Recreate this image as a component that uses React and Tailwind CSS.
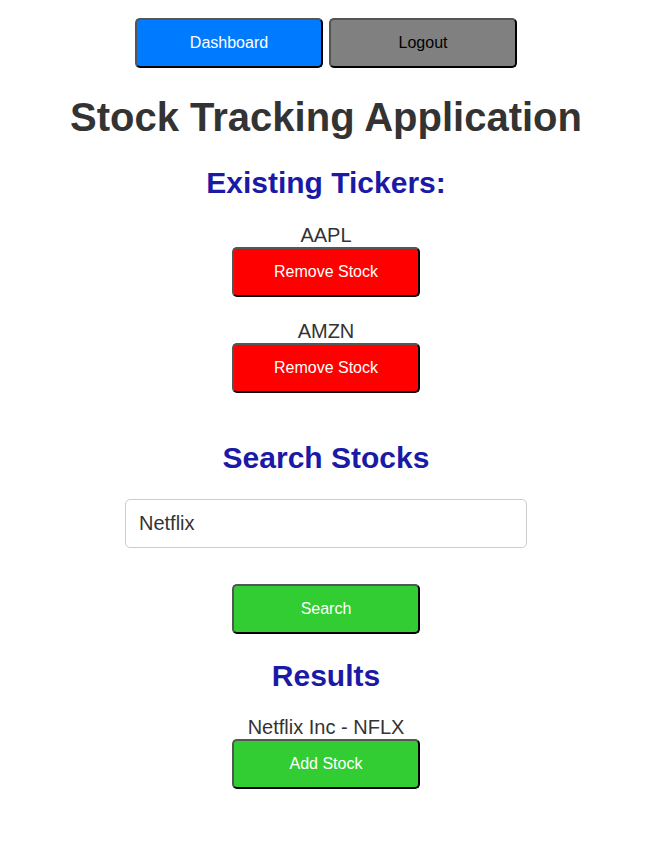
const tickers = ['AAPL', 'AMZN']

const btn =
  'w-[188px] h-[50px] rounded-[5px] border-2 border-t-[#555] border-l-[#555] border-r-black border-b-black text-[16px] leading-none'

export default function App() {
  return (
    <div className="min-h-[856px] bg-white pt-[18px] pr-[11px] text-[#333] font-['Liberation_Sans',Arial,sans-serif] flex flex-col items-center">
      <div className="flex gap-[6px]">
        <button type="button" className={`${btn} w-[187px] bg-[#007bff] text-white`}>
          Dashboard
        </button>
        <button type="button" className={`${btn} w-[187px] bg-[#808080] text-black`}>
          Logout
        </button>
      </div>

      <h1 className="mt-[26px] text-[40px] leading-[46px] font-bold text-[#333]">Stock Tracking Application</h1>

      <h2 className="mt-[26px] text-[30px] leading-[34px] font-bold text-[#1a1aa6]">Existing Tickers:</h2>

      <div className="mt-[24px] flex flex-col items-center gap-[23px]">
        {tickers.map((t) => (
          <div key={t} className="flex flex-col items-center">
            <p className="text-[20px] leading-[23px]">{t}</p>
            <button type="button" className={`${btn} bg-[#ff0000] text-white`}>
              Remove Stock
            </button>
          </div>
        ))}
      </div>

      <h2 className="mt-[48px] text-[30px] leading-[34px] font-bold text-[#1a1aa6]">Search Stocks</h2>

      <input
        type="text"
        defaultValue="Netflix"
        className="mt-[24px] w-[402px] h-[49px] rounded-[5px] border border-[#ccc] px-[13px] text-[20px] text-[#333] outline-none"
      />

      <button type="button" className={`${btn} mt-[36px] bg-[#32cd32] text-white`}>
        Search
      </button>

      <h2 className="mt-[25px] text-[30px] leading-[34px] font-bold text-[#1a1aa6]">Results</h2>

      <div className="mt-[23px] flex flex-col items-center">
        <p className="text-[20px] leading-[23px]">Netflix Inc - NFLX</p>
        <button type="button" className={`${btn} bg-[#32cd32] text-white`}>
          Add Stock
        </button>
      </div>
    </div>
  )
}
